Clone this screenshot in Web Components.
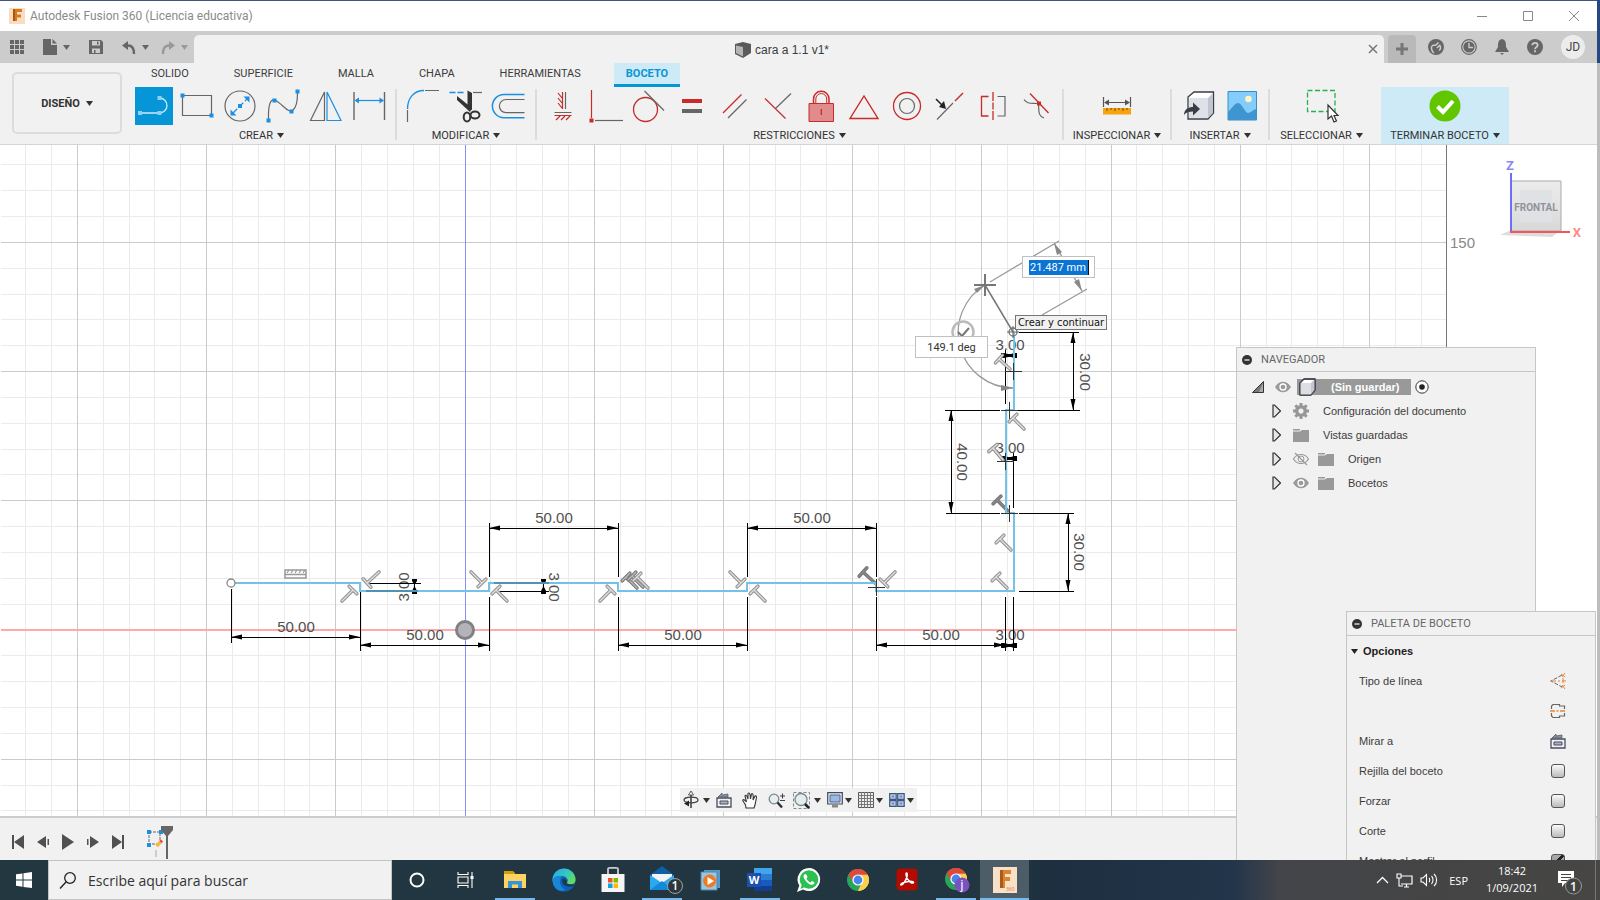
<!DOCTYPE html>
<html lang="es">
<head>
<meta charset="utf-8">
<title>Autodesk Fusion 360 (Licencia educativa)</title>
<style>
html,body{margin:0;height:100%;overflow:hidden}
body{font-family:"Liberation Sans",sans-serif;font-size:11px;color:#3c3c3c;
--ui:Roboto,"Liberation Sans",sans-serif;--seg:"Open Sans","Noto Sans",sans-serif}
</style>
</head>
<body>
<fusion-desktop></fusion-desktop>
<script>
const G='#666',B='#1a8fe3',R='#c92a2a';
const dot=(x,y,c=B)=>`<rect x="${x-2}" y="${y-2}" width="4" height="4" fill="${c}"/>`;
const ln=(d,c=G,w=1.2,x='')=>`<path d="${d}" fill="none" stroke="${c}" stroke-width="${w}" ${x}/>`;
const fill=(d,c,x='')=>`<path d="${d}" fill="${c}" ${x}/>`;
const cubeW=`<path d="M2 6 6 2H17V13L13 18H2z" fill="#fff" stroke="#3a3d44" stroke-width="1.3"/><path d="M2 6H13V18H2z" fill="#dcdee4"/><path d="M13 6 17 2V13L13 18z" fill="#c3c6cf"/><path d="M2 6 6 2H17V13L13 18H2z" fill="none" stroke="#3a3d44"/>`;
const chromeArt=`<circle cx="12" cy="12" r="11" fill="#2aa557"/><path d="M12 12 2.5 6.5A11 11 0 0 1 21.5 6.5z" fill="#dc4a3e"/><path d="M12 12 21.5 6.5A11 11 0 0 1 12 23L16 14z" fill="#fcd04b"/><path d="M12 6.5H21.5A11 11 0 0 0 2.5 6.5L7 14z" fill="#dc4a3e"/><path d="M12 6.7H21.6A11 11 0 0 1 12 23L17 14z" fill="#fcd04b"/><circle cx="12" cy="12" r="5.6" fill="#fff"/><circle cx="12" cy="12" r="4.4" fill="#4487ee"/>`;
const ICONS={
line:[38,38,ln('M5 26H24.5A7.3 7.3 0 0 0 24.5 11','#cdeafa',1.3)+dot(5,26,'#8fd0f5')+dot(24.5,26,'#8fd0f5')+dot(24.5,11,'#8fd0f5')],
rect:[38,38,ln('M4.5 8.5H33.5V28.5H4.5z')+dot(4.5,8.5)+dot(33.5,28.5)],
circle:[38,38,`<circle cx="19" cy="19" r="15" fill="none" stroke="${G}" stroke-width="1.2"/>`+ln('M12 26 26 12',B,1.2,'stroke-dasharray="6 2.5"')+fill('M9.500 28.500V22.500L15.500 28.500zM28.500 9.500V15.500L22.500 9.500z',B)+dot(19,19)],
spline:[38,38,ln('M4.500 32V26C5 14 8 10 14 15 21 20 24 26 29 23 33 20 33.500 14 33.500 6')+dot(4.5,33.5)+dot(10.5,13.5)+dot(27.500,24.500)+dot(33.500,4.500)],
mirror:[38,38,ln('M17.500 5V33.500H3.500z')+ln('M20 5V33.500H34z',B)],
dim:[38,38,ln('M4 5V33M34.500 5V33',G,1.4)+ln('M6 13.500H33',B)+fill('M4.500 13.500 9 10.500V16.500zM34 13.500 29.500 10.500V16.500z',B)],
fillet:[38,38,ln('M3.500 23V35M21 3.500H35')+ln('M3.500 22C3.500 11 10 3.500 20 3.500',B,1.4)],
trim:[38,38,ln('M2.500 5.500H18',B,1.3,'stroke-dasharray="6 2"')+ln('M26 5.500H35')+fill('M20.500 3.500 25 6V23L20.500 21z','#333')+fill('M10 9 25 21 23 25 10 13z','#333')+`<ellipse cx="20" cy="30" rx="3.300" ry="4.500" fill="none" stroke="#333" stroke-width="2"/><ellipse cx="28" cy="28" rx="4.500" ry="3.500" fill="none" stroke="#333" stroke-width="2"/>`],
offset:[38,38,ln('M34.500 7.500H14A11.600 11.600 0 0 0 14 30.700H34.500',B,1.5)+ln('M34.500 12.500H16A6.600 6.600 0 0 0 16 25.700H34.500')],
hv:[38,38,ln('M21.500 5V22M10.500 25.500H27.500')+ln('M18.500 5V22M10.500 28.500H27.500M18 11 14 6M18 16 14 11M18 21 14 16M12 33 16 29M17 33 21 29M22 33 26 29',R)],
coin:[38,38,ln('M4.500 3V31',R)+ln('M8 33.500H36')+dot(4.5,33.5,R)],
tan:[38,38,`<circle cx="15.500" cy="22.500" r="12" fill="none" stroke="${R}" stroke-width="1.300"/>`+ln('M14.500 4 34 23.500')],
eq:[38,38,fill('M9 12H29V16H9z',R)+fill('M9 22H29V26H9z',G)],
par:[38,38,ln('M7 26 25.500 7.500',R)+ln('M12 31 30.500 12.500')],
perp:[38,38,ln('M6 11.500 26.500 31.500',R)+ln('M16.500 21.500 32 6.500')],
lock:[38,38,ln('M11.500 16V12A7.500 7.500 0 0 1 27 12V16',R,1.5)+ln('M13.800 16V12A5.300 5.300 0 0 1 24.700 12V16',R,1)+`<path d="M7 16.500H31.500V34.500H7z" fill="#e18c8c" stroke="${R}"/>`+ln('M19.300 22V28',R,1.3)],
tri:[38,38,ln('M5 31.500H33L19 9z',R,1.4)],
conc:[38,38,`<circle cx="19" cy="19" r="13.500" fill="none" stroke="${R}" stroke-width="1.300"/><circle cx="19" cy="19" r="7.500" fill="none" stroke="${G}" stroke-width="1.200"/>`],
mid:[38,38,ln('M6 32.500 22 16')+ln('M24 14 32 6',R,1.4)+ln('M5 12 12 19','#222',1.5)+fill('M15 22 8 20 13 14z','#222')],
sym:[38,38,ln('M14.500 9.500H7.500V29H14.500M19 5V33',R,1.3)+fill('M18 14H20V15.500H18zM18 22.500H20V24H18z','#f1f1f1')+ln('M23.500 9.500H31V29H23.500')],
curv:[38,38,ln('M13 6.500 31.500 26',R,1.3)+ln('M7 12.500C10 17 14 16 20 16.500M21.500 18C22 24 21 29 27 31')+dot(22,16.500,R)],
measure:[38,38,ln('M5.500 10V20M32.500 10V20M7 15.500H31','#555')+fill('M6 15.500 11 12.500V18.500zM32 15.500 27 12.500V18.500z','#555')+fill('M5 21H33V27.500H5z','#f7a30b')+ln('M9 21V24M13 21V23M17 21V24M21 21V23M25 21V24M29 21V23','#6b4b10',1)],
insert:[38,38,`<path d="M8 10 14 5H33.500V26L28 32H8z" fill="#fff" stroke="#3a3d44" stroke-width="1.300"/><path d="M9 11H28V31H9z" fill="#dfe1e8"/><path d="M28 11 33 6V26L28 31z" fill="#c2c5cf"/>`+fill('M4 28C4 22 9 20 13 20V15.500L20 22 13 28.500V24.500C9 24.500 6 25 4 28z','#3a3d44')],
image:[38,38,`<path d="M5 4.500H33.500V33H5z" fill="#84ccfb" stroke="#3a8cc4"/><path d="M5 33V25C10 20 12 16 15 16 19 16 22 26 25 26 28 26 29 23 33.500 22V33z" fill="#3f95cf"/><circle cx="25.500" cy="12" r="3.300" fill="#fdf6c5"/>`],
select:[38,38,ln('M4.500 3.500H32V24.500H4.500z','#27b04f',1.3,'stroke-dasharray="5 2.500"')+`<path d="M25 18V32L28.500 29 31 35 33.500 34 31 28.500H35z" fill="#fff" stroke="#333" stroke-width="1.200"/>`],
finish:[38,38,`<circle cx="19" cy="19" r="15.500" fill="#61c600"/>`+ln('M11.500 19.500 17 25 27 14','#fff',4)],
grid:[14,14,[0,5,10].map(x=>[0,5,10].map(y=>`<rect x="${x}" y="${y}" width="4" height="4" fill="#666"/>`).join('')).join('')],
file:[14,16,fill('M0 0H8V6H14V16H0zM9.500 0 14 4.500H9.500z','#666')],
save:[14,14,fill('M0 0H12L14 2V14H0z','#666')+fill('M3 1H11V5.500H3zM3 8.500H11V13H3z','#ccc')+fill('M8 1.500H9.500V4.500H8zM5 10H6.500V13H5z','#666')],
undo:[14,13,ln('M3 4.500H6C10 4.500 12 7 12 13','#666',2.4)+fill('M0 4.500 6 0V9z','#666')],
redo:[14,13,ln('M11 4.500H8C4 4.500 2 7 2 13','#999',2.400)+fill('M14 4.500 8 0V9z','#999')],
down:[7,5,fill('M0 0H7L3.500 5z','currentColor')],
doc:[16,16,fill('M0 2 8 0 16 2V11L8 16 0 12z','#5a5a5a')+fill('M1 3.500 8 5V14.500L1 11z','#b5b5b5')],
x:[10,10,ln('M1 1 9 9M9 1 1 9','#777',1.5)],
plus:[14,14,ln('M7 1V13M1 7H13','#777',3)],
ext:[16,16,`<circle cx="8" cy="8" r="8" fill="#666"/>`+ln('M6 14C3.500 12 2.500 8 4.500 6.500 6 5.500 7 7 8 6L10.500 3.500M9 9 12 6M11 11.500C13 10 13 8 11.500 6','#ccc',1.5)],
clock:[16,16,`<circle cx="8" cy="8" r="7.300" fill="none" stroke="#666" stroke-width="1.200"/><circle cx="8" cy="8" r="5.600" fill="#666"/>`+ln('M8 4V8.500H12','#ccc',1.4)],
bell:[14,16,fill('M7 0C11 1 11 4 11 8L14 13H0L3 8C3 4 3 1 7 0zM5 14H9L7 16z','#666')],
help:[16,16,`<circle cx="8" cy="8" r="8" fill="#666"/>`+ln('M5.300 6.300C5.300 3 10.700 3 10.700 6.300 10.700 8 8 8 8 10.300M8 11.300V13.300','#ccc',1.8)],
wmin:[10,10,ln('M0 5.500H10','#888',1)],
wmax:[10,10,ln('M.5 .5H9.500V9.500H.5z','#888',1)],
wx:[10,10,ln('M0 0 10 10M10 0 0 10','#888',1)],
app:[16,16,`<rect width="16" height="16" fill="#fbdcc0"/><path d="M4 1H13V4H8V6.500H12V9.500H8V13H4z" fill="#d87b1e"/><path d="M4 1H6V13H4z" fill="#a85710"/>`],
first:[12,14,fill('M0 0H2V14H0zM12 0V14L2 7z','#505050')],
prev:[12,12,fill('M9 0V12L0 6zM10.500 3H12V9H10.500z','#505050')],
play:[12,16,fill('M0 0 12 8 0 16z','#505050')],
next:[12,12,fill('M3 0V12L12 6zM0 3H1.500V9H0z','#505050')],
last:[12,14,fill('M10 0H12V14H10zM0 0V14L10 7z','#505050')],
sketch:[18,26,ln('M3 3H14V15H3z','#666',1,'stroke-dasharray="3 1"')+dot(3,3)+dot(15,3)+dot(3,16)+ln('M10.500 17 15 12.500','#f5b942',3.500)+ln('M14.500 13 16 11.500','#ee3a57',3)+fill('M9 21H11V28H9z','#ccc')],
marker:[12,33,fill('M0 0H12V4L7 10V33H5V10L0 4z','#666')],
minus:[10,10,`<circle cx="5" cy="5" r="5" fill="#333"/>`+ln('M2.500 5H7.500','#eee',1.3)],
expand:[12,12,`<path d="M11.500 .5V11.500H.5z" fill="#777" stroke="#333"/><path d="M11 2V11H7z" fill="#aaa"/>`],
tri2:[10,14,`<path d="M1 1H2.500L8.500 7 2.500 13H1z" fill="#e6e6ea" stroke="#333" stroke-width="1.200"/>`],
eye:[16,12,fill('M0 6C4 -1 12 -1 16 6 12 13 4 13 0 6z','#9a9a9a')+`<circle cx="8" cy="6" r="3" fill="none" stroke="#fff" stroke-width="1.300"/>`],
eyeoff:[16,12,`<path d="M.5 6C4 0 12 0 15.500 6 12 12 4 12 .5 6z" fill="none" stroke="#999" stroke-width="1.200"/><circle cx="8" cy="6" r="3" fill="none" stroke="#999"/>`+ln('M2 0 14 12','#999',1.3)],
gear:[16,16,`<circle cx="8" cy="8" r="4.300" fill="none" stroke="#979797" stroke-width="3.500"/>`+ln('M8 0V3M8 13V16M0 8H3M13 8H16M2.300 2.300 4.500 4.500M11.500 11.500 13.700 13.700M2.300 13.700 4.500 11.500M11.500 4.500 13.700 2.300','#979797',3)],
folder:[16,13,fill('M0 0H7V1.500H0zM0 2.500H7L9 1H16V13H0z','#999')],
comp:[18,18,`<svg width="18" height="18" viewBox="1 1 18 18">${cubeW}</svg>`],
radio:[14,14,`<circle cx="7" cy="7" r="6.200" fill="#fff" stroke="#333"/><circle cx="7" cy="7" r="2.800" fill="#222"/>`],
constr:[16,16,ln('M12 2 1 8 12 14','#666',1,'stroke-dasharray="4 1.500"')+ln('M0 8H16','#e8853a',1.2,'stroke-dasharray="6 2 2 2"')+ln('M11 1 15 4M15 0 12 4M11 15 15 12M15 16 12 12M13 5V10','#e8853a',1)],
center:[16,16,ln('M1.500 6V3L3 1.500H9.500V3H14.500V6M1.500 10V13L3 14.500H9.500V13H14.500V10','#666',1.2)+ln('M0 8H16','#e8853a',1.300,'stroke-dasharray="5 1.500 2 1.500"')],
look:[16,16,`<path d="M1 6H15V15H1z" fill="#eef0f5" stroke="#4a4f5c" stroke-width="1.300"/><path d="M4 9H12V12H4z" fill="#aab2c0" stroke="#4a4f5c"/><path d="M2 5 6 1V3L12 2V5z" fill="#8a93a4" stroke="#4a4f5c" stroke-width=".7"/>`],
orbit:[16,18,ln('M8 1V17','#444',1.6)+`<path d="M8 0 10.500 4H5.500z" fill="#fff" stroke="#333" stroke-width=".8"/>`+`<ellipse cx="8" cy="9" rx="7" ry="2.800" fill="none" stroke="#444" stroke-width="1.300"/>`+fill('M1 12.500 6 9.500V15.500z','#222')],
hand:[16,17,`<path d="M4 16 3.500 13 .7 8.500C1 7 2.500 7.500 4.500 10L3 4C3.500 2.500 5 3 6 7L6 1.500C7 .3 8.300 1 8.500 7L9.500 2C10.500 1 11.700 2 11 8L13 4C14.300 3.500 15 4.500 14 8L13 13 12 16z" fill="#fff" stroke="#333" stroke-width="1.100"/>`],
zoom:[17,17,`<circle cx="6" cy="7" r="4.800" fill="#e5eff2" stroke="#7b8790" stroke-width="1.300"/>`+ln('M9.500 10.500 14 15.500','#333',2.500)+ln('M12 4H17M14.500 1.500V6.500M12 8.500H17','#444',1.100)],
fit:[17,17,ln('M.5 .5H16.500V16.500H.5z','#888',1,'stroke-dasharray="3 2"')+`<circle cx="8" cy="7.500" r="6" fill="#e2eeee" stroke="#7b8790" stroke-width="1.300"/>`+ln('M12 12 16 16','#222',2.500)],
display:[16,16,`<path d="M.7 .7H15.300V12H.7z" fill="#e8ebf2" stroke="#444a5a" stroke-width="1.200"/><path d="M3 3H13V10H3z" fill="#9db8e0" stroke="#4a6898"/><path d="M5 12.500H11V15.500H5z" fill="#888"/>`],
gridw:[16,16,`<path d="M.5 .5H15.500V15.500H.5z" fill="#eee" stroke="#555"/>`+ln('M3.500 0V16M6.500 0V16M9.500 0V16M12.500 0V16M0 3.500H16M0 6.500H16M0 9.500H16M0 12.500H16','#777',1)],
views:[16,14,[0,8].map(x=>[0,7].map(y=>`<path d="M${x+.7} ${y+.7}h6.500v5.600h-6.500z" fill="#b9cdec" stroke="#3f5780" stroke-width="1.200"/><path d="M${x+2.700} ${y+2.500}h2.500v2h-2.500z" fill="#6f8fc2"/>`).join('')).join('')],
win:[16,16,fill('M0 2.300 6.500 1.400V7.600H0zM7.500 1.200 16 0V7.600H7.500zM0 8.500H6.500V14.700L0 13.800zM7.500 8.500H16V16L7.500 14.900z','#fff')],
search:[16,17,`<circle cx="10" cy="6" r="5.300" fill="none" stroke="#222" stroke-width="1.300"/>`+ln('M6 10 0 16.500','#222',1.4)],
cortana:[16,16,`<circle cx="8" cy="8" r="6.500" fill="none" stroke="#fff" stroke-width="2"/>`],
tview:[18,16,ln('M1 0V2.500H11V0M1 16V13.500H11V16M1 5H11V11H1zM15 0V16','#fff',1.100)+fill('M13.500 4H16.500V7H13.500z','#fff')],
explorer:[22,20,fill('M0 1H9L11 3V8H0z','#d99a09')+fill('M0 4H22V18H0z','#fcd462')+fill('M4 11H18V18H14V14.500H8V18H4z','#3a93d8')],
edge:[24,24,`<defs><linearGradient id="e" x1="0" y1="0" x2="1" y2=".6"><stop offset="0" stop-color="#27a5e8"/><stop offset=".6" stop-color="#36c8c0"/><stop offset="1" stop-color="#64dd5c"/></linearGradient></defs><circle cx="12" cy="12" r="11.500" fill="#0c62b8"/><path d="M.5 12A11.500 11.500 0 0 1 23.500 12C23.500 17 17 17 15 15 17 12 15 8 10 8 5 8 1 10 .5 14z" fill="url(#e)"/><path d="M.5 12C2 8 8 7 10 8.500 7 11 7 18 13 22 6 25 .5 19 .5 12z" fill="#1a86d8"/><path d="M10.500 11C9 16 13 19 20 18.500L23 18C20 15 16 17 14.500 15.500 16 13 13 10 10.500 11z" fill="#21384a"/>`],
store:[24,26,ln('M7 7V2C7 1 8 .8 9 .8H15C17 .8 17 1 17 2V7','#ccc',1.8)+fill('M.5 7H23.500V25H.5z','#f5f5f5')+fill('M7 11H11.500V15.500H7z','#f25022')+fill('M12.500 11H17V15.500H12.500z','#7fba00')+fill('M7 16.500H11.500V21H7z','#00a4ef')+fill('M12.500 16.500H17V21H12.500z','#ffb900')],
mail:[24,28,fill('M0 9 12 0 24 9V14H0z','#0f5ea8')+fill('M2 8H22V16H2z','#f3f3f3')+fill('M0 9 12 17 24 9V24H0z','#2aa9f0')+fill('M0 24 12 15 24 24z','#1389dc')+`<circle cx="25" cy="20" r="7.500" fill="#2c363c" stroke="#9aa4a9"/><text x="25" y="24" text-anchor="middle" font-size="12" fill="#fff" font-family="Open Sans,sans-serif" font-weight="600">1</text>`],
media:[20,20,`<path d="M3 0H19V18H3z" fill="#5b9ac4"/><path d="M0 2H16V20H0z" fill="#9ac6e0" stroke="#4d86ad"/><circle cx="8.500" cy="11" r="6.500" fill="#ef7a23"/>`+fill('M6.500 7V15L13 11z','#fff')],
word:[26,24,fill('M7 0H25V6H7z','#41a5ee')+fill('M7 6H25V12H7z','#2b7cd3')+fill('M7 12H25V18H7z','#185abd')+fill('M7 18H25V23H7z','#103f91')+fill('M0 5H14V19H0z','#1a50b0')+`<text x="7" y="16" text-anchor="middle" font-size="11" font-weight="700" fill="#fff" font-family="Open Sans,sans-serif">W</text>`],
whats:[24,24,fill('M12 0A11.500 11.500 0 1 1 6 21.500L0 24 2.300 17.500A11.500 11.500 0 0 1 12 0z','#fff')+`<circle cx="12" cy="11.500" r="9.300" fill="#2bc04f"/>`+fill('M3.500 21 5 16 8 19z','#2bc04f')+fill('M8 6C6 7 6 9 8 12 11 16 14 18 17 16 18 15 17.500 14 15 13L13.500 14.500C12 14 10 12 9.500 10.500L10.500 9C10 7 9 6 8 6z','#fff')],
chrome:[24,24,chromeArt],
pdf:[22,24,`<rect x=".5" y=".5" width="21" height="22" rx="4" fill="#b30b00"/>`+ln('M4.500 17C5 14 17 12 17.500 14.500 16 17 10 11 10 6.500 10 3.500 12 5 11 8.500 10 12 7 18 4.500 17','#fff',1.500)],
chromej:[26,28,`<g transform="translate(1,1)">${chromeArt}</g><circle cx="19" cy="19" r="7.500" fill="#7a52c0"/><text x="19" y="23" text-anchor="middle" font-size="12" fill="#fff" font-family="Roboto,sans-serif">j</text>`],
fusion:[24,26,`<rect width="24" height="26" fill="#fbe0c8"/><path d="M7 3H18V7H12V10H17V14H12V21H7z" fill="#dd8430"/><path d="M7 3H10V21H7z" fill="#a95c1c"/><text x="13" y="24" font-size="5" fill="#d87b1e" font-family="Open Sans,sans-serif">360</text>`],
chev:[13,8,ln('M1 7 6.500 1.500 12 7','#fff',1.300)],
net:[17,15,ln('M5 3H16V11H5M8 14H13M10.500 11V14','#fff',1.200)+ln('M1 1H5V5H1zM3 5V13H7','#fff',1.100)],
vol:[18,14,ln('M1 5H3L6.500 1.500V12.500L3 9H1z','#fff',1.100)+ln('M9 5C10 6 10 8 9 9M11.500 3C13.500 5 13.500 9 11.500 11M14 1C17.500 4 17.500 10 14 13','#fff',1.100)],
notif:[26,22,fill('M0 2H16V14H7L4 18V14H0z','#fff')+ln('M3 5.500H13M3 8.500H13M3 11.500H10','#444',1)+`<circle cx="15.500" cy="17" r="8" fill="#444" stroke="#999"/><text x="15.500" y="21.500" text-anchor="middle" font-size="12" font-weight="600" fill="#fff" font-family="Open Sans,sans-serif">1</text>`]
};
function define(tag,css,html,after){
  const t=document.createElement('template');
  t.innerHTML=`<style>*{box-sizing:border-box}button{font:inherit;color:inherit;background:none;border:0;padding:0;margin:0;display:flex;align-items:center;justify-content:center}${css}</style>${html}`;
  customElements.define(tag,class extends HTMLElement{
    connectedCallback(){
      if(this.shadowRoot)return;
      this.attachShadow({mode:'open'}).append(t.content.cloneNode(true));
      if(after)after.call(this,this.shadowRoot);
    }
  });
}
const ic=n=>`<ui-icon name="${n}"></ui-icon>`;
const btn=(n,label,cls='')=>`<button type="button" aria-label="${label}" class="${cls}">${ic(n)}</button>`;

define('ui-icon',':host{display:block;flex:none}svg{display:block;overflow:visible}','',function(r){
  const [w,h,s]=ICONS[this.getAttribute('name')];
  r.innerHTML+=`<svg width="${w}" height="${h}" viewBox="0 0 ${w} ${h}" aria-hidden="true">${s}</svg>`;
});

define('title-bar',`:host{display:flex;align-items:center;height:31px;background:#fff;border-top:1px solid #41547c;padding-left:9px;color:#8a8a8a;font:12px var(--ui)}
span{flex:1;padding-left:5px}button{width:46px;height:30px}`,
`${ic('app')}<span>Autodesk Fusion 360 (Licencia educativa)</span>${btn('wmin','Minimizar')}${btn('wmax','Maximizar')}${btn('wx','Cerrar')}`);

define('quick-bar',`:host{display:flex;height:32px;background:#ccc;padding-top:4px;color:#666}
.q{display:flex;align-items:center;width:194px;padding:0 0 4px 10px;gap:19px}
.q div{display:flex;gap:6px;align-items:center}.q .f{color:#999;margin-left:-7px}
.tab{flex:1;display:flex;align-items:center;background:#f1f1f1;border-radius:5px 5px 0 0;color:#3c3c3c;font-size:12px}
.tab span{flex:1;display:flex;gap:4px;align-items:center;justify-content:center;padding:1px 0 0 8px}
.tab button{width:22px}
.add{width:28px;margin:0 3px 0 4px;background:#b9b9b9;border-radius:4px 4px 0 0}
.r{display:flex;align-items:center;padding-bottom:4px}.r button{width:33px;height:24px}
.r .jd{width:24px;margin:0 12px 0 10px;border-radius:50%;background:#ececec;color:#444;font:12px var(--ui)}`,
`<div class="q">${btn('grid','Mostrar panel de datos')}<div>${btn('file','Archivo')}${btn('down','Menú archivo')}</div>${btn('save','Guardar')}<div>${btn('undo','Deshacer')}${btn('down','Historial deshacer')}</div><div class="f">${btn('redo','Rehacer')}${btn('down','Historial rehacer')}</div></div>
<div class="tab"><span>${ic('doc')}cara a 1.1 v1*</span>${btn('x','Cerrar documento')}</div>
${btn('plus','Nuevo documento','add')}
<div class="r">${btn('ext','Extensiones')}${btn('clock','Estado de trabajos')}${btn('bell','Notificaciones')}${btn('help','Ayuda')}<button type="button" class="jd">JD</button></div>`);

define('ribbon-group',`:host{display:flex;flex-direction:column;align-items:center;flex:none;height:57px;font:11px var(--ui);color:#333}
.i{display:flex;height:38px;gap:5px}.lab{height:19px;gap:4px;white-space:nowrap;padding-top:2px}
button.on{background:#0696d7}.i button{width:38px}:host([active]){background:#cdeaf6}`,
`<div class="i"></div><button type="button" class="lab"><slot></slot>${ic('down')}</button>`,function(r){
  r.querySelector('.i').innerHTML=this.getAttribute('tools').split(' ').map(n=>btn(n,n,n==='line'?'on':'')).join('');
});

define('fusion-ribbon',`:host{display:flex;height:82px;background:#f1f1f1;border-bottom:1px solid #d4d4d4;font:11px var(--ui);color:#3c3c3c}
.ws{width:110px;height:62px;margin:9px 8px 0 12px;border:2px solid #dcdcdc;border-radius:5px;font-weight:700;color:#333;gap:6px;flex:none}
.main{flex:1;min-width:0}
nav{display:flex;height:24px;gap:21px;padding-left:9px}
nav a{padding:0 12px;line-height:22px;height:24px;color:inherit;text-decoration:none}
nav a.on{background:#cdeaf6;border-bottom:3px solid #0696d7;color:#0696d7;font-weight:700}
.g{display:flex}.g i{width:2px;margin:2px 0 4px;background:#dcdcdc;flex:none}
.w1{width:265px;padding-right:2px}.w2{width:138px}.w3{width:525px}.w4{width:106px}.w5{width:96px}.w6{width:111px;padding-right:8px}.w7{width:128px}`,
`<button type="button" class="ws">DISEÑO${ic('down')}</button>
<div class="main"><nav><a href="#">SOLIDO</a><a href="#">SUPERFICIE</a><a href="#">MALLA</a><a href="#">CHAPA</a><a href="#">HERRAMIENTAS</a><a href="#" class="on">BOCETO</a></nav>
<div class="g"><ribbon-group class="w1" tools="line rect circle spline mirror dim">CREAR</ribbon-group><i></i>
<ribbon-group class="w2" tools="fillet trim offset">MODIFICAR</ribbon-group><i></i>
<ribbon-group class="w3" tools="hv coin tan eq par perp lock tri conc mid sym curv">RESTRICCIONES</ribbon-group><i></i>
<ribbon-group class="w4" tools="measure">INSPECCIONAR</ribbon-group><i></i>
<ribbon-group class="w5" tools="insert image">INSERTAR</ribbon-group><i></i>
<ribbon-group class="w6" tools="select">SELECCIONAR</ribbon-group>
<ribbon-group class="w7" tools="finish" active>TERMINAR BOCETO</ribbon-group></div></div>`);

define('sketch-canvas',`:host{display:block;position:relative;overflow:hidden;background:#fff}
svg{position:absolute;left:0;top:0;width:100%;height:100%}
text{font:15px "Liberation Sans",sans-serif;fill:#505050;text-anchor:middle}
.c{shape-rendering:crispEdges}
.box{position:absolute;width:73px;height:22px;background:#fff;border:1px solid #c0c0c0;display:flex;align-items:center;justify-content:center}
input{border:0;padding:0;margin:0;outline:0;height:15px;font:11px Roboto,"Liberation Sans",sans-serif;color:#333;width:60px;text-align:center;background:none}
.len{left:1022px;top:111px}.len input{background:#0a74d4;color:#fff;border-right:1px solid #111}
.ang{left:915px;top:191px}
.tip{position:absolute;left:1015px;top:170px;width:92px;height:15px;border:1px solid #777;background:#f1f1f1;color:#111;font:11px/13px "DejaVu Sans Condensed","DejaVu Sans",sans-serif;text-align:center;white-space:nowrap}`,
`<svg role="img" aria-label="Boceto"></svg>
<div class="box len"><input aria-label="Longitud" value="21.487 mm"></div>
<div class="box ang"><input aria-label="Ángulo" value="149.1 deg"></div>
<div class="tip" role="tooltip">Crear y continuar</div>`,function(r){
  const END=1446,u=25.84;let s='',min='',maj='';
  for(let i=-18;i<38;i++){const x=Math.floor(465+i*u);const p=`M${x} 145V820`;i%5?min+=p:maj+=p}
  for(let i=-8;i<19;i++){const y=Math.floor(630-i*u);const p=`M1 ${y}H${END}`;i%5?min+=p:maj+=p}
  s+=`<g class="c">${ln(min,'#ebebeb',1)}${ln(maj,'#cbcbcb',1)}${ln('M1446 145V820','#777',1)}${ln('M1 630H1446','#ffaaaa',2)}${ln('M465 145V820','#8c8cff',1)}</g>`;
  s+=`<circle cx="465" cy="630" r="8.500" fill="#b3b3b8" stroke="#808085" stroke-width="3"/>`;
  s+=`<text x="1450" y="248" style="text-anchor:start;fill:#888">150</text>`;
  let ext='',heads='',small='';
  const arrow=(x,y,dx,dy)=>{const bx=x-dx*11,by=y-dy*11;heads+=`M${x} ${y}L${bx-dy*2.5} ${by+dx*2.5} ${bx+dy*2.5} ${by-dx*2.5}z`};
  const hdim=(a,b,y,t,ty)=>{ext+=`M${a} ${y}H${b}`;arrow(a,y,-1,0);arrow(b,y,1,0);s+=`<text x="${Math.round((a+b)/2)}" y="${ty}">${t}</text>`};
  const vdim=(x,a,b)=>{ext+=`M${x} ${a}V${b}`;arrow(x,a,0,-1);arrow(x,b,0,1)};
  const rot=(x,y,a,t)=>{s+=`<text transform="translate(${x} ${y}) rotate(${a})" y="5">${t}</text>`};
  hdim(231,360,637,'50.00',632);
  [[360,489],[618,747],[876,1005]].forEach(([a,b])=>hdim(a,b,645,'50.00',640));
  [[489,618],[747,876]].forEach(([a,b])=>hdim(a,b,528,'50.00',523));
  ext+='M231 589V643M360 592V651M489 597V651M618 597V651M747 597V651M876 597V651M1005 597V651M1013 597V651';
  ext+='M489 523V577M618 523V577M747 523V577M876 523V577';
  ext+='M366 583H421M494 591H549M366 591H418M494 583H557';
  vdim(951,410,513);vdim(1068,513,591);vdim(1073,332,410);
  ext+='M945 410H1000M946 513H1000M1019 513H1074M1019 591H1074M1019 332H1079M1014 410H1080M1005 350V404M1013 453V508';
  rot(962,462,90,'40.00');rot(1079,552,90,'30.00');rot(1085,372,90,'30.00');rot(404,587,-90,'3.00');rot(554,587,90,'3.00');
  [[350,355],[453,458],[640,645]].forEach(([t,y])=>{s+=`<text x="1010" y="${t}">3.00</text>`;small+=`M1001 ${y-2}h3l4 1h3l3 -1h3v5h-3l-3 -1h-3l-4 1h-3z`});
  [414,543].forEach(x=>{small+=`M${x-2} 579h5v2l-2 3v3l2 4v3h-5v-3l2 -4v-3l-2 -3z`});
  s+=`<g class="c">${ln(ext,'#000',1)}</g>${fill(heads+small,'#000')}`;
  const T=(x,y,dx,dy,c='#949494',l='#dedede')=>{const k=.35,d=`M${x} ${y}l${dx} ${dy}M${x-dy*k} ${y+dx*k}L${x+dy*k} ${y-dx*k}`;
    return `<path d="${d}" stroke="${c}" stroke-width="3.600" stroke-linecap="round"/><path d="${d}" stroke="${l}" stroke-width="1.400" stroke-linecap="round"/>`};
  s+=T(367,583,12,-11)+T(353,590,-11,11)+T(482,583,-11,-11)+T(496,590,11,11)+T(611,590,-11,11)+T(626,577,11,11,'#777','#bbb')+T(632,576,11,11,'#777','#bbb')+T(637,577,11,11)
   +T(741,583,-11,-11)+T(754,590,11,11)+T(863,572,12,11,'#777','#888')+T(884,583,11,-11)+T(996,577,11,11)+T(1000,539,11,11)+T(997,500,11,11,'#777','#888')+T(993,448,10,12)+T(1013,418,11,11)+T(999,359,11,10);
  s+=`<path d="M285 570V578H306V570zM285 574.500H306" fill="none" stroke="#999" stroke-width="1.500"/><path d="M287 573l2 -3M291 573l2 -3M295 573l2 -3M299 573l2 -3M303 573l2 -3" stroke="#999" stroke-width="1.200"/>`;
  s+=ln('M231 583H360V591H489V583H618V591H747V583H876V591H1014V513H1006V410H1014V332','#74c2e8',2);
  s+=ln('M366 591H418M494 583H549','#4f93b4',2);
  s+=`<circle cx="231" cy="583" r="4" fill="#fff" stroke="#888" stroke-width="1.300"/>`;
  const cr=(x,y)=>`M${x-8} ${y}H${x+9}M${x} ${y-8}V${y+9}`;
  s+=`<g class="c">${ln(cr(1013,371)+cr(1009,410)+cr(1005,461)+cr(1009,513)+cr(876,587),'#333',1)}</g>`;
  s+=`<g fill="none" stroke="#999" stroke-width="1.300"><path d="M985 285A55.500 55.500 0 0 0 1013 388M990 282 1059 241M1042 315 1087 289M1054 243 1082 291"/><circle cx="963" cy="332" r="10.500" stroke-width="2.500" stroke="#bbb"/><path d="M958 332 962 336 969 328" stroke-width="2" stroke="#777"/></g>`;
  s+=fill('M985 285 974 289 977 293zM1013 388 1001 385V391zM1054 243 1062 252 1057 255zM1082 291 1074 282 1079 279z','#888');
  s+=ln('M985 285 1013 332','#777',1.500)+ln('M974 285H996M985 274V296','#777',2)+`<circle cx="1013" cy="332" r="4" fill="none" stroke="#777" stroke-width="1.300"/>`+ln('M1007 332H1019M1013 326V338','#666',1);
  r.querySelector('svg').innerHTML=`<g transform="translate(0,-145)">${s}</g>`;
});

define('view-cube',`:host{display:block}svg{display:block}text{font:700 10px var(--ui);text-anchor:middle}`,
`<svg width="90" height="90" viewBox="1500 155 90 90"><defs><linearGradient id="f" x1="0" y1="0" x2="0" y2="1"><stop offset="0" stop-color="#ececec"/><stop offset="1" stop-color="#d8d8d8"/></linearGradient></defs>
<path d="M1500 235 1511 230H1561L1552 237z" fill="#ddd"/><path d="M1511 181H1561V231H1511z" fill="url(#f)" stroke="#aaa"/><path d="M1520 190H1552V222H1520z" fill="#dfe1e5"/>
<text x="1536" y="211" fill="#909398">FRONTAL</text><path d="M1511 173V232" stroke="#6f6ff5" stroke-width="2"/><path d="M1510 232H1570" stroke="#ee5a5a" stroke-width="2"/>
<text x="1510" y="170" style="font-size:13px" fill="#8888f5">Z</text><text x="1577" y="237" style="font-size:13px" fill="#f88">X</text></svg>`);

define('nav-toolbar',`:host{display:flex;width:237px;height:24px;background:#f1f1f1;align-items:center;gap:6px;padding-left:3px;color:#333}
div{display:flex;gap:2px;align-items:center}.w{gap:4px}.m{margin-left:4px}.n{margin-left:2px}`,
`<div class="w">${btn('orbit','Órbita')}${btn('down','Opciones de órbita')}</div>${btn('look','Mirar a')}${btn('hand','Encuadre','m')}${btn('zoom','Zoom','m')}<div class="w n">${btn('fit','Ajustar')}${btn('down','Opciones de zoom')}</div><div>${btn('display','Visualización')}${btn('down','Opciones de visualización')}</div><div>${btn('gridw','Rejilla')}${btn('down','Opciones de rejilla')}</div><div>${btn('views','Ventanas')}${btn('down','Opciones de ventanas')}</div>`);

define('timeline-bar',`:host{display:flex;height:44px;background:#f1f1f1;border-top:2px solid #ccc;align-items:center;padding:6px 0 0 12px}
.p{display:flex;gap:13px}.m{display:flex;align-items:flex-start;margin-left:22px}.m>ui-icon{margin-left:-3px}.s{padding-top:3px}`,
`<div class="p">${btn('first','Inicio')}${btn('prev','Anterior')}${btn('play','Reproducir')}${btn('next','Siguiente')}${btn('last','Final')}</div><div class="m"><div class="s">${ic('sketch')}</div>${ic('marker')}</div>`);

define('float-panel',`:host{display:block;background:#f1f1f1;border:1px solid #c6c6c6}
header{display:flex;align-items:center;height:24px;border-bottom:1px solid #c6c6c6;padding-left:5px;gap:9px;font:11px var(--ui);color:#666}h2{font:inherit;margin:0}`,
`<header>${btn('minus','Contraer')}<h2></h2></header><slot></slot>`,function(r){r.querySelector('h2').textContent=this.getAttribute('heading')});

define('model-browser',`:host{display:block;padding:3px 0 0 15px}
ul{list-style:none;margin:0;padding:0}li{display:flex;align-items:center;height:24px}
.c{padding-left:20px}.c button:first-child{margin-right:11px}.c span{padding-left:14px}
.e{margin-right:9px}.t{margin-right:11px}
.root{background:#999;color:#fff;font-weight:700;height:16px;width:114px;margin:0 4px 0 6px;justify-content:flex-start;padding-left:2px;gap:14px}`,
`<ul><li>${btn('expand','Contraer','t')}${btn('eye','Visible')}<button type="button" class="root">${ic('comp')}(Sin guardar)</button>${btn('radio','Activar componente')}</li>
<li class="c">${btn('tri2','Expandir')}${ic('gear')}<span>Configuración del documento</span></li>
<li class="c">${btn('tri2','Expandir')}${ic('folder')}<span>Vistas guardadas</span></li>
<li class="c">${btn('tri2','Expandir')}${btn('eyeoff','Oculto','e')}${ic('folder')}<span>Origen</span></li>
<li class="c">${btn('tri2','Expandir')}${btn('eye','Visible','e')}${ic('folder')}<span>Bocetos</span></li></ul>`);

define('sketch-palette',`:host{display:block;padding:0 29px 0 12px}
h3{display:flex;gap:5px;align-items:center;margin:0 0 0 -8px;height:30px;font-size:11px;color:#222}
.r{display:flex;align-items:center;justify-content:space-between;height:30px}
input{appearance:none;width:14px;height:14px;margin:0 1px;border:1px solid #555;border-radius:3px;background:linear-gradient(#fafafa,#bbb)}
input:checked{background:linear-gradient(135deg,transparent 40%,#222 40% 55%,transparent 55%),linear-gradient(#aaa,#999)}`,
`<h3>${ic('down')}Opciones</h3>
<div class="r">Tipo de línea${btn('constr','Construcción')}</div><div class="r"><span></span>${btn('center','Línea de centro')}</div><div class="r">Mirar a${btn('look','Mirar a')}</div>
<div class="r"><label for="a">Rejilla del boceto</label><input id="a" type="checkbox"></div>
<div class="r"><label for="b">Forzar</label><input id="b" type="checkbox"></div>
<div class="r"><label for="c">Corte</label><input id="c" type="checkbox"></div>
<div class="r"><label for="d">Mostrar el perfil</label><input id="d" type="checkbox" checked></div>`);

define('win-taskbar',`:host{display:flex;height:40px;color:#fff;font:11px var(--seg);background:linear-gradient(90deg,#223740,#213641 62%,#1d2f40 66%,#22354a 77%,#43454a 80%,#444 90%,#474645)}
.st{width:48px}.s{display:flex;align-items:center;width:344px;height:40px;background:#f1f1f1;border:1px solid #c4c4c4;padding-left:11px;gap:12px}
input{border:0;background:none;outline:0;padding:0;font:14px var(--seg);flex:1;min-width:0}input::placeholder{color:#333;opacity:1}
.a{display:flex;flex:1}.a button{width:49px;height:40px}.a .u{background:linear-gradient(#76b9ed,#76b9ed) center bottom/40px 2px no-repeat}
.a .f{background:linear-gradient(#76b9ed,#76b9ed) center bottom/49px 2px no-repeat,#4d5d68}
.t{display:flex;align-items:center;gap:7px}.t span{padding-left:4px}time{display:block;width:74px;text-align:center;line-height:17px;padding-bottom:2px}
.n{width:32px;padding-right:2px}.d{width:5px;height:40px;border-left:1px solid #777}`,
`${btn('win','Inicio','st')}<label class="s">${ic('search')}<input type="search" aria-label="Buscar" placeholder="Escribe aquí para buscar"></label>
<div class="a">${btn('cortana','Cortana')}${btn('tview','Vista de tareas')}${btn('explorer','Explorador','u')}${btn('edge','Edge')}${btn('store','Store')}${btn('mail','Correo','u')}${btn('media','Media Player')}${btn('word','Word','u')}${btn('whats','WhatsApp')}${btn('chrome','Chrome')}${btn('pdf','Acrobat')}${btn('chromej','Chrome perfil j','u')}${btn('fusion','Fusion 360','f')}</div>
<div class="t">${btn('chev','Iconos ocultos')}${btn('net','Red')}${btn('vol','Volumen')}<span>ESP</span><time>18:42<br>1/09/2021</time>${btn('notif','Notificaciones','n')}<div class="d"></div></div>`);

define('fusion-desktop',`:host{display:grid;grid-template:minmax(0,1fr) 40px/minmax(0,1fr);height:100vh;overflow:hidden}
.win{display:grid;grid-template:31px 32px 82px minmax(0,1fr)/minmax(0,1fr);padding-right:3px;min-height:0;background:linear-gradient(#26477f 63px,#bdbdbd 63px)}
.work{position:relative;display:grid;grid-template:minmax(0,1fr) 44px/minmax(0,1fr);overflow:hidden}
view-cube{position:absolute;right:7px;top:10px}
nav-toolbar{position:absolute;left:680px;bottom:48px}
.nav,.pal{position:absolute;bottom:-2px}.nav{right:61px;top:202px;width:300px}.pal{right:1px;top:466px;width:250px;overflow:hidden}`,
`<div class="win"><title-bar></title-bar><quick-bar></quick-bar><fusion-ribbon></fusion-ribbon>
<div class="work"><sketch-canvas></sketch-canvas><timeline-bar></timeline-bar><view-cube></view-cube><nav-toolbar></nav-toolbar>
<float-panel class="nav" heading="NAVEGADOR"><model-browser></model-browser></float-panel>
<float-panel class="pal" heading="PALETA DE BOCETO"><sketch-palette></sketch-palette></float-panel></div></div>
<win-taskbar></win-taskbar>`);
</script>
</body>
</html>
